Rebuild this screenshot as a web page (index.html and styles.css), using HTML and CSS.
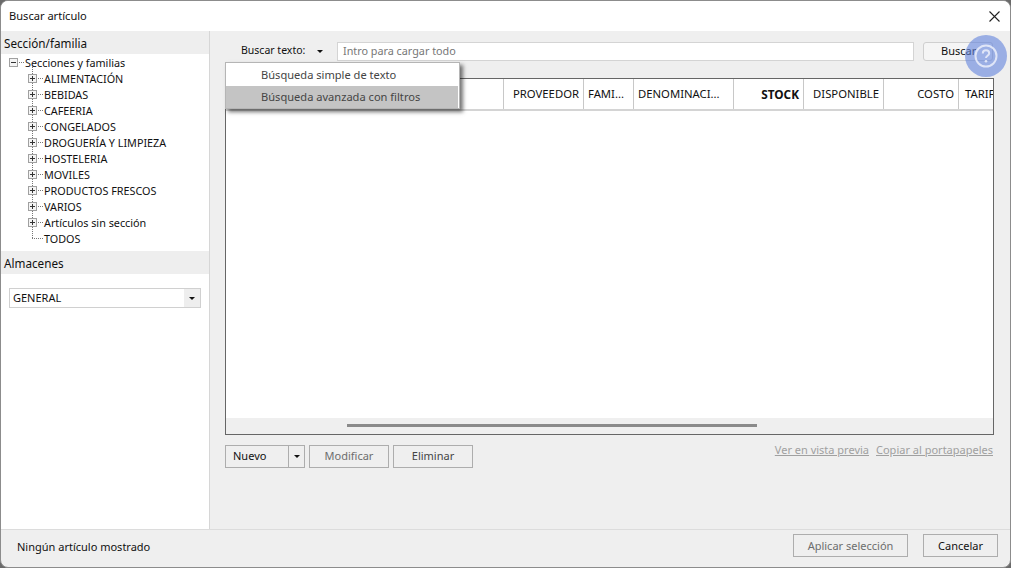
FILE: index.html
```html
<!DOCTYPE html>
<html lang="es">
<head>
    <meta charset="UTF-8">
    <meta name="viewport" content="width=device-width, initial-scale=1.0">
    <title>Buscar artículo</title>
    <link rel="stylesheet" href="styles.css">
</head>
<body>
    <svg class="sprites" width="0" height="0">
        <symbol id="plus" viewBox="0 0 9 9">
            <rect x="0.5" y="0.5" width="8" height="8" fill="#f4f4f4" stroke="#a0a0a0"/>
            <path d="M2 4.5h5M4.5 2v5" stroke="#333" fill="none"/>
        </symbol>
        <symbol id="minus" viewBox="0 0 9 9">
            <rect x="0.5" y="0.5" width="8" height="8" fill="#f4f4f4" stroke="#a0a0a0"/>
            <path d="M2 4.5h5" stroke="#333" fill="none"/>
        </symbol>
    </svg>

    <div class="window">
        <div class="titlebar">
            <span>Buscar artículo</span>
            <svg class="close" width="11" height="11" viewBox="0 0 11 11">
                <path d="M0.5 0.5l10 10M10.5 0.5l-10 10" stroke="#222" stroke-width="1.1" fill="none"/>
            </svg>
        </div>

        <div class="content">
            <div class="sidebar">
                <div class="side-head">Sección/familia</div>
                <div class="tree">
                    <div class="tree-root">
                        <svg class="exp"><use href="#minus"/></svg><i class="dots"></i><span>Secciones y familias</span>
                    </div>
                    <ul class="tree-list">
                        <li><svg class="exp"><use href="#plus"/></svg><i class="dots"></i><span>ALIMENTACIÓN</span></li>
                        <li><svg class="exp"><use href="#plus"/></svg><i class="dots"></i><span>BEBIDAS</span></li>
                        <li><svg class="exp"><use href="#plus"/></svg><i class="dots"></i><span>CAFEERIA</span></li>
                        <li><svg class="exp"><use href="#plus"/></svg><i class="dots"></i><span>CONGELADOS</span></li>
                        <li><svg class="exp"><use href="#plus"/></svg><i class="dots"></i><span>DROGUERÍA Y LIMPIEZA</span></li>
                        <li><svg class="exp"><use href="#plus"/></svg><i class="dots"></i><span>HOSTELERIA</span></li>
                        <li><svg class="exp"><use href="#plus"/></svg><i class="dots"></i><span>MOVILES</span></li>
                        <li><svg class="exp"><use href="#plus"/></svg><i class="dots"></i><span>PRODUCTOS FRESCOS</span></li>
                        <li><svg class="exp"><use href="#plus"/></svg><i class="dots"></i><span>VARIOS</span></li>
                        <li><svg class="exp"><use href="#plus"/></svg><i class="dots"></i><span>Artículos sin sección</span></li>
                        <li class="leaf"><i class="dots-long"></i><span>TODOS</span></li>
                    </ul>
                </div>
                <div class="side-head">Almacenes</div>
                <div class="select">
                    <span>GENERAL</span>
                    <div class="select-btn"><b class="caret"></b></div>
                </div>
            </div>

            <div class="main">
                <div class="search-row">
                    <span class="search-label">Buscar texto:</span>
                    <b class="caret search-caret"></b>
                    <div class="search-input">Intro para cargar todo</div>
                    <div class="search-btn">Buscar</div>
                </div>

                <div class="grid">
                    <div class="grid-head">
                        <div class="col col-first"></div>
                        <div class="col col-prov">PROVEEDOR</div>
                        <div class="col col-fam">FAMI...</div>
                        <div class="col col-den">DENOMINACI...</div>
                        <div class="col col-stock">STOCK</div>
                        <div class="col col-disp">DISPONIBLE</div>
                        <div class="col col-costo">COSTO</div>
                        <div class="col col-tarif">TARIFA</div>
                    </div>
                    <div class="grid-body"></div>
                    <div class="grid-scroll"><div class="thumb"></div></div>
                </div>

                <div class="actions">
                    <div class="btn split">
                        <span class="split-label">Nuevo</span>
                        <span class="split-arrow"><b class="caret"></b></span>
                    </div>
                    <div class="btn disabled">Modificar</div>
                    <div class="btn eliminar">Eliminar</div>
                    <div class="links">
                        <a>Ver en vista previa</a>
                        <a>Copiar al portapapeles</a>
                    </div>
                </div>

                <div class="menu">
                    <div class="menu-item">Búsqueda simple de texto</div>
                    <div class="menu-item active">Búsqueda avanzada con filtros</div>
                </div>
            </div>
        </div>

        <div class="statusbar">
            <span class="status-text">Ningún artículo mostrado</span>
            <div class="status-btns">
                <div class="btn disabled apply">Aplicar selección</div>
                <div class="btn cancel">Cancelar</div>
            </div>
        </div>

        <div class="help">
            <svg width="24" height="24" viewBox="0 0 24 24">
                <circle cx="12" cy="12" r="10.500" fill="none" stroke="#dfe5f7" stroke-width="2"/>
                <path d="M8.800 9.500c0-2 1.400-3.200 3.200-3.200s3.200 1.100 3.200 2.900c0 2.500-3.200 2.500-3.200 4.800" fill="none" stroke="#dfe5f7" stroke-width="2"/>
                <circle cx="12" cy="17.300" r="1.300" fill="#dfe5f7"/>
            </svg>
        </div>
    </div>
</body>
</html>
```

FILE: styles.css
```css
* {
    box-sizing: border-box;
}
html, body {
    margin: 0;
    height: 100%;
    overflow: hidden;
}
body {
    background: #6a6a6a;
    font-family: "Noto Sans", "Open Sans", sans-serif;
    font-size: 11px;
    color: #111;
}
.sprites {
    position: absolute;
}
.window {
    position: relative;
    width: 1011px;
    height: 568px;
    display: flex;
    flex-direction: column;
    background: #efefef;
    border: 1px solid #8c8c8c;
    border-radius: 8px;
    overflow: hidden;
}
.titlebar {
    height: 30px;
    flex: none;
    display: flex;
    align-items: center;
    justify-content: space-between;
    padding: 0 10px 2px 8px;
    background: #fff;
    font-size: 11.1px;
}
.close {
    margin-top: 2px;
}
.content {
    flex: 1;
    display: flex;
    min-height: 0;
}

/* left panel */
.sidebar {
    width: 209px;
    flex: none;
    background: #fff;
    border-right: 1px solid #d6d6d6;
}
.side-head {
    height: 23px;
    line-height: 24px;
    padding-left: 3px;
    background: #eee;
    font-size: 11.7px;
}
.tree {
    height: 197px;
    padding: 0 0 0 8px;
    font-size: 10.800px;
}
.tree-root, .tree-list li {
    height: 16px;
    display: flex;
    align-items: center;
    white-space: nowrap;
}
.tree-list {
    list-style: none;
    margin: 0;
    padding: 0 0 0 19px;
    position: relative;
}
.tree-list::before {
    content: "";
    position: absolute;
    left: 23px;
    top: -4px;
    height: 172px;
    border-left: 1px dotted #777;
}
.exp {
    width: 9px;
    height: 9px;
    flex: none;
    position: relative;
}
.dots {
    width: 5px;
    margin: 0 1px 0 1px;
    flex: none;
    border-top: 1px dotted #777;
}
.leaf {
    padding-left: 4px;
}
.dots-long {
    width: 11px;
    margin-right: 1px;
    flex: none;
    border-top: 1px dotted #777;
}
.select {
    margin: 14px 8px 0;
    height: 20px;
    width: 192px;
    display: flex;
    align-items: center;
    justify-content: space-between;
    padding: 0 0 0 3px;
    border: 1px solid #d0d0d0;
}
.select span {
    margin-top: -2px;
}
.select-btn {
    width: 16px;
    height: 18px;
    display: flex;
    align-items: center;
    justify-content: center;
    background: #eee;
}
.caret {
    display: block;
    width: 0;
    height: 0;
    border-left: 3px solid transparent;
    border-right: 3px solid transparent;
    border-top: 3px solid #111;
}

/* right panel */
.main {
    position: relative;
    flex: 1;
    padding: 0 16px 0 15px;
    min-width: 0;
}
.search-row {
    height: 47px;
    padding-top: 11px;
    display: flex;
    align-items: flex-start;
}
.search-label {
    margin-left: 16px;
    width: 76px;
    line-height: 17px;
    font-size: 10.500px;
}
.search-caret {
    margin: 8px 14px 0 0;
}
.search-input {
    width: 577px;
    height: 19px;
    line-height: 16px;
    padding-left: 5px;
    background: #fff;
    border: 1px solid #d4d4d4;
    color: #777;
    font-size: 10.800px;
}
.search-btn {
    margin-left: 9px;
    width: 70px;
    height: 19px;
    line-height: 16px;
    padding-left: 17px;
    background: #f5f5f5;
    border: 1px solid #cfcfcf;
    border-radius: 3px;
}
.grid {
    width: 769px;
    height: 357px;
    display: flex;
    flex-direction: column;
    border: 1px solid #666;
    background: #fff;
    overflow: hidden;
}
.grid-head {
    height: 32px;
    flex: none;
    display: flex;
    border-bottom: 2px solid #d4d4d4;
}
.col {
    flex: none;
    line-height: 30px;
    padding: 0 4px;
    border-right: 1px solid #c8c8c8;
    white-space: nowrap;
    font-size: 11.300px;
    overflow: hidden;
}
.col-first { width: 278px; }
.col-prov { width: 80px; text-align: right; }
.col-fam { width: 50px; }
.col-den { width: 100px; }
.col-stock { width: 70px; text-align: right; font-weight: 700; font-size: 11.800px; }
.col-disp { width: 80px; text-align: right; }
.col-costo { width: 75px; text-align: right; }
.col-tarif { width: 36px; padding-left: 6px; border-right: 0; }
.grid-body {
    flex: 1;
}
.grid-scroll {
    height: 16px;
    flex: none;
    padding: 6px 0 0 121px;
    background: #efefef;
}
.thumb {
    width: 410px;
    height: 3px;
    background: #8a8a8a;
}
.actions {
    margin-top: 10px;
    display: flex;
    align-items: flex-start;
    gap: 4px;
}
.btn {
    height: 23px;
    line-height: 19px;
    width: 80px;
    text-align: center;
    border: 1px solid #adadad;
    background: #efefef;
}
.btn.disabled {
    color: #6d6d6d;
}
.eliminar {
    color: #444;
}
.split {
    width: 80px;
    display: flex;
    text-align: left;
}
.split-label {
    width: 63px;
    padding-left: 7px;
    border-right: 1px solid #adadad;
}
.split-arrow {
    flex: 1;
    display: flex;
    align-items: center;
    justify-content: center;
}
.links {
    margin: -3px 1px 0 auto;
    display: flex;
    gap: 7px;
    line-height: 15px;
    color: #a0a0a0;
}
.links a {
    text-decoration: underline;
}

/* popup menu */
.menu {
    position: absolute;
    left: 15px;
    top: 31px;
    width: 235px;
    height: 47px;
    padding: 1px 1px 0 0;
    background: #fff;
    border: 1px solid #b5b5b5;
    box-shadow: 3px 3px 4px rgba(0, 0, 0, 0.55);
    color: #444;
    font-size: 11.1px;
}
.menu-item {
    height: 22px;
    line-height: 22px;
    padding-left: 35px;
}
.menu-item.active {
    background: #c4c4c4;
}

/* bottom */
.statusbar {
    height: 38px;
    flex: none;
    display: flex;
    align-items: flex-start;
    justify-content: space-between;
    padding: 4px 12px 0 16px;
    border-top: 1px solid #dcdcdc;
}
.status-text {
    line-height: 25px;
}
.status-btns {
    display: flex;
    gap: 15px;
}
.status-btns .btn {
    line-height: 21px;
}
.apply {
    width: 115px;
}
.cancel {
    width: 75px;
}

/* help bubble over the window */
.help {
    position: absolute;
    left: 964px;
    top: 34px;
    width: 42px;
    height: 42px;
    display: flex;
    align-items: center;
    justify-content: center;
    border-radius: 50%;
    background: rgba(97, 130, 220, 0.6);
}
```
